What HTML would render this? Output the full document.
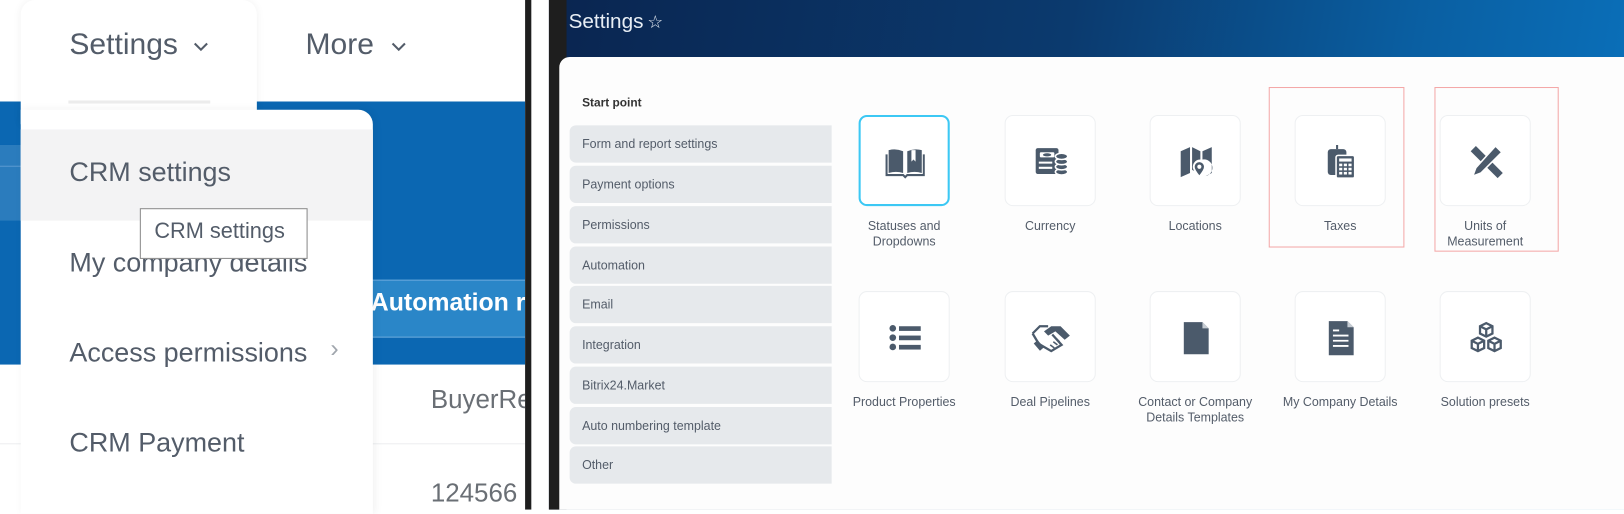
<!DOCTYPE html>
<html><head><meta charset="utf-8"><style>
*{margin:0;padding:0;box-sizing:border-box}
body{width:1624px;height:492px;overflow:hidden;background:#fff;font-family:"Liberation Sans","DejaVu Sans",sans-serif;position:relative}
#w{position:absolute;left:0;top:0;width:1568px;height:475px;transform:scale(1.0357);transform-origin:0 0}
.a{position:absolute}
.lt{color:#535c69;font-size:26px;white-space:nowrap}
.side{position:absolute;left:550px;width:253px;height:36px;background:#e6e9ec;border-radius:6px 0 0 6px;font-size:12px;color:#535c69;padding-left:12px;line-height:36px}
.tile{position:absolute;width:88px;height:88px;border:1px solid #eef0f2;border-radius:8px;background:#fff}
.tile svg{position:absolute;left:26px;top:26px}
.lab{position:absolute;width:160px;text-align:center;font-size:12px;color:#535c69;line-height:15px}
</style></head><body><div id="w">
<!-- LEFT PANEL -->
<div class="a" style="left:0;top:98px;width:507px;height:254px;background:#0b67b2"></div>
<div class="a" style="left:0;top:140px;width:21px;height:73px;background:#2b7cbd"></div>
<div class="a" style="left:0;top:160px;width:21px;height:1px;background:#5b9ad0"></div>
<div class="a" style="left:248px;top:270px;width:259px;height:56px;background:#2a86c8;border-top:1px solid #6aa8dc;border-bottom:1px solid #6aa8dc"></div>
<div class="a" style="left:358px;top:279px;color:#fff;font-weight:bold;font-size:24px;white-space:nowrap">Automation r</div>
<div class="a" style="left:0;top:428px;width:507px;height:1px;background:#eceef0"></div>
<div class="a lt" style="left:416px;top:372px;color:#6a6f75;font-size:25px">BuyerRe</div>
<div class="a lt" style="left:416px;top:462px;color:#6a6f75;font-size:25px">124566</div>
<!-- dropdown -->
<div class="a" style="left:20px;top:0;width:228px;height:120px;background:#fff;border-radius:14px 14px 0 0;box-shadow:0 0 8px rgba(0,0,0,.06)"></div>
<div class="a" style="left:20px;top:106px;width:340px;height:390px;background:#fff;border-radius:0 14px 0 0;box-shadow:2px 0 8px rgba(0,0,0,.06)"></div>
<div class="a lt" style="left:67px;top:27px;font-size:29px">Settings</div>
<svg class="a" style="left:186px;top:40px" width="16" height="10"><path d="M2 2l6 6 6-6" stroke="#535c69" stroke-width="2" fill="none"/></svg>
<div class="a lt" style="left:295px;top:27px;font-size:29px">More</div>
<svg class="a" style="left:377px;top:40px" width="16" height="10"><path d="M2 2l6 6 6-6" stroke="#535c69" stroke-width="2" fill="none"/></svg>
<div class="a" style="left:66px;top:97px;width:137px;height:3px;background:#ececec"></div>
<div class="a" style="left:20px;top:125px;width:340px;height:88px;background:#f3f3f4"></div>
<div class="a lt" style="left:67px;top:151px">CRM settings</div>
<div class="a lt" style="left:67px;top:238px">My company details</div>
<div class="a lt" style="left:67px;top:325px">Access permissions</div>
<div class="a" style="left:319px;top:323px;color:#a0a6ad;font-size:24px">›</div>
<div class="a lt" style="left:67px;top:412px">CRM Payment</div>
<div class="a" style="left:135px;top:201px;width:162px;height:49px;border:1px solid #8a8a8a;background:#fff;font-size:21px;color:#535c69;padding:10px 0 0 13px;white-space:nowrap">CRM settings</div>
<!-- divider -->
<div class="a" style="left:507px;top:0;width:23px;height:492px;background:#fff"></div>
<div class="a" style="left:507px;top:0;width:6px;height:492px;background:#1e1e1e"></div>
<div class="a" style="left:530px;top:0;width:1040px;height:492px;background:linear-gradient(100deg,#0a2550 0%,#0b3a6e 45%,#0a5fa2 75%,#0a74c0 100%)"></div>
<div class="a" style="left:530px;top:0;width:17px;height:492px;background:#1e1e1e"></div>
<div class="a" style="left:549px;top:10px;color:#e8eef5;font-size:20px">Settings</div>
<div class="a" style="left:625px;top:12px;color:#e8eef5;font-size:17px">☆</div>
<div class="a" style="left:540px;top:55px;width:1030px;height:437px;background:#fdfdfd;border-radius:10px 0 0 0"></div>
<!-- sidebar -->
<div class="a" style="left:562px;top:94px;font-size:11.5px;font-weight:bold;color:#333">Start point</div>
<div class="side" style="top:121px">Form and report settings</div>
<div class="side" style="top:160px">Payment options</div>
<div class="side" style="top:199px">Permissions</div>
<div class="side" style="top:238px">Automation</div>
<div class="side" style="top:276px">Email</div>
<div class="side" style="top:315px">Integration</div>
<div class="side" style="top:354px">Bitrix24.Market</div>
<div class="side" style="top:393px">Auto numbering template</div>
<div class="side" style="top:431px">Other</div>
<!-- red boxes -->
<div class="a" style="left:1225px;top:84px;width:131px;height:155px;border:1.5px solid #f4a8a8"></div>
<div class="a" style="left:1385px;top:84px;width:120px;height:159px;border:1.5px solid #f4a8a8"></div>
<!-- tiles row1 -->
<div class="tile" style="left:829px;top:111px;border:2px solid #3cc8f4">
<svg width="38" height="36" viewBox="0 0 38 36" style="left:24px;top:26px"><path d="M3 6q7-2 14 1v21q-7-2-14 0z M21 7q7-3 14-1v22q-7-2-14 0z" fill="#4b5a6b"/><path d="M1 10v20h16l2 2 2-2h16V10" fill="none" stroke="#4b5a6b" stroke-width="2"/><path d="M25 6v11l2-2 2 2V6" fill="#fff"/></svg></div>
<div class="tile" style="left:970px;top:111px"><svg width="36" height="36" viewBox="0 0 36 36"><rect x="3" y="5" width="22" height="25" rx="2" fill="#4b5a6b"/><rect x="7" y="9" width="14" height="5" rx="1" fill="#fff"/><ellipse cx="14" cy="11.5" rx="4" ry="1.5" fill="#4b5a6b"/><path d="M6 19h13M6 24h13" stroke="#fff" stroke-width="2"/><g fill="#4b5a6b" stroke="#fff" stroke-width="1.5"><ellipse cx="28" cy="28" rx="6" ry="3"/><ellipse cx="28" cy="23" rx="6" ry="3"/><ellipse cx="28" cy="18" rx="6" ry="3"/><ellipse cx="28" cy="13" rx="6" ry="3"/></g></svg></div>
<div class="tile" style="left:1110px;top:111px"><svg width="36" height="36" viewBox="0 0 36 36"><path d="M3 8l9-4v25l-9 4z M14 4l8 4v8a7 7 0 0 0-6 11l-2-1z M24 8l9-4v25l-6 3a7 7 0 0 0-3-16z" fill="#4b5a6b"/><path d="M21 18a5 5 0 0 1 5 5c0 3-5 9-5 9s-5-6-5-9a5 5 0 0 1 5-5z" fill="#4b5a6b" stroke="#fff" stroke-width="1"/><circle cx="21" cy="23" r="2" fill="#fff"/></svg></div>
<div class="tile" style="left:1250px;top:111px"><svg width="36" height="36" viewBox="0 0 36 36"><rect x="5" y="6" width="18" height="25" rx="3" fill="#4b5a6b"/><path d="M13 6V2h2v4" fill="#4b5a6b"/><rect x="13" y="12" width="18" height="22" rx="2" fill="#4b5a6b" stroke="#fff" stroke-width="1.5"/><rect x="16" y="15" width="12" height="3" fill="#fff"/><g fill="#fff"><rect x="16" y="20" width="3" height="2.5"/><rect x="20.5" y="20" width="3" height="2.5"/><rect x="25" y="20" width="3" height="2.5"/><rect x="16" y="24" width="3" height="2.5"/><rect x="20.5" y="24" width="3" height="2.5"/><rect x="25" y="24" width="3" height="2.5"/><rect x="16" y="28" width="3" height="2.5"/><rect x="20.5" y="28" width="3" height="2.5"/><rect x="25" y="28" width="3" height="2.5"/></g></svg></div>
<div class="tile" style="left:1390px;top:111px"><svg width="36" height="36" viewBox="0 0 36 36"><path d="M8 3l26 26-5 5L3 8z" fill="#4b5a6b"/><path d="M27 3l6 6-20 20-8 3 3-8z" fill="#4b5a6b" stroke="#fff" stroke-width="1.5"/></svg></div>
<div class="lab" style="left:793px;top:211px">Statuses and<br>Dropdowns</div>
<div class="lab" style="left:934px;top:211px">Currency</div>
<div class="lab" style="left:1074px;top:211px">Locations</div>
<div class="lab" style="left:1214px;top:211px">Taxes</div>
<div class="lab" style="left:1354px;top:211px">Units of<br>Measurement</div>
<!-- row2 -->
<div class="tile" style="left:829px;top:281px"><svg width="36" height="36" viewBox="0 0 36 36"><circle cx="6" cy="9" r="3.2" fill="#4b5a6b"/><circle cx="6" cy="18" r="3.2" fill="#4b5a6b"/><circle cx="6" cy="27" r="3.2" fill="#4b5a6b"/><rect x="12" y="7" width="21" height="4.5" fill="#4b5a6b"/><rect x="12" y="16" width="21" height="4.5" fill="#4b5a6b"/><rect x="12" y="25" width="21" height="4.5" fill="#4b5a6b"/></svg></div>
<div class="tile" style="left:970px;top:281px"><svg width="42" height="36" viewBox="0 0 42 36" style="left:23px;top:26px"><path d="M14 12l7-5h9l9 9-5 4-9-8-7 4z" fill="#4b5a6b"/><path d="M3 14l7-7h8M3 14l6 10 12 7 10-6-9-10" fill="none" stroke="#4b5a6b" stroke-width="2.2"/><path d="M6 22l6 7" stroke="#4b5a6b" stroke-width="5"/><path d="M20 25l4 3M23 22l4 3M26 19l3 3" stroke="#4b5a6b" stroke-width="1.5"/></svg></div>
<div class="tile" style="left:1110px;top:281px"><svg width="36" height="36" viewBox="0 0 36 36"><path d="M6 3h18l6 6v25H6z" fill="#4b5a6b"/><path d="M24 3v6h6" fill="#c5cbd2"/></svg></div>
<div class="tile" style="left:1250px;top:281px"><svg width="36" height="36" viewBox="0 0 36 36"><path d="M6 2h18l6 6v27H6z" fill="#4b5a6b"/><path d="M24 2l6 6h-6z" fill="#c5cbd2"/><path d="M10 11h6M10 16h15M10 21h15M10 26h15" stroke="#fff" stroke-width="1.8"/></svg></div>
<div class="tile" style="left:1390px;top:281px"><svg width="36" height="36" viewBox="0 0 36 36" fill="none" stroke="#4b5a6b" stroke-width="2.2"><path d="M18 4l6 3v7l-6 3-6-3V7z M12 7l6 3 6-3 M18 10v7"/><path d="M10 18l6 3v7l-6 3-6-3v-7z M4 21l6 3 6-3 M10 24v7"/><path d="M26 18l6 3v7l-6 3-6-3v-7z M20 21l6 3 6-3 M26 24v7"/></svg></div>
<div class="lab" style="left:793px;top:381px">Product Properties</div>
<div class="lab" style="left:934px;top:381px">Deal Pipelines</div>
<div class="lab" style="left:1074px;top:381px">Contact or Company<br>Details Templates</div>
<div class="lab" style="left:1214px;top:381px">My Company Details</div>
<div class="lab" style="left:1354px;top:381px">Solution presets</div>
</div></body></html>
